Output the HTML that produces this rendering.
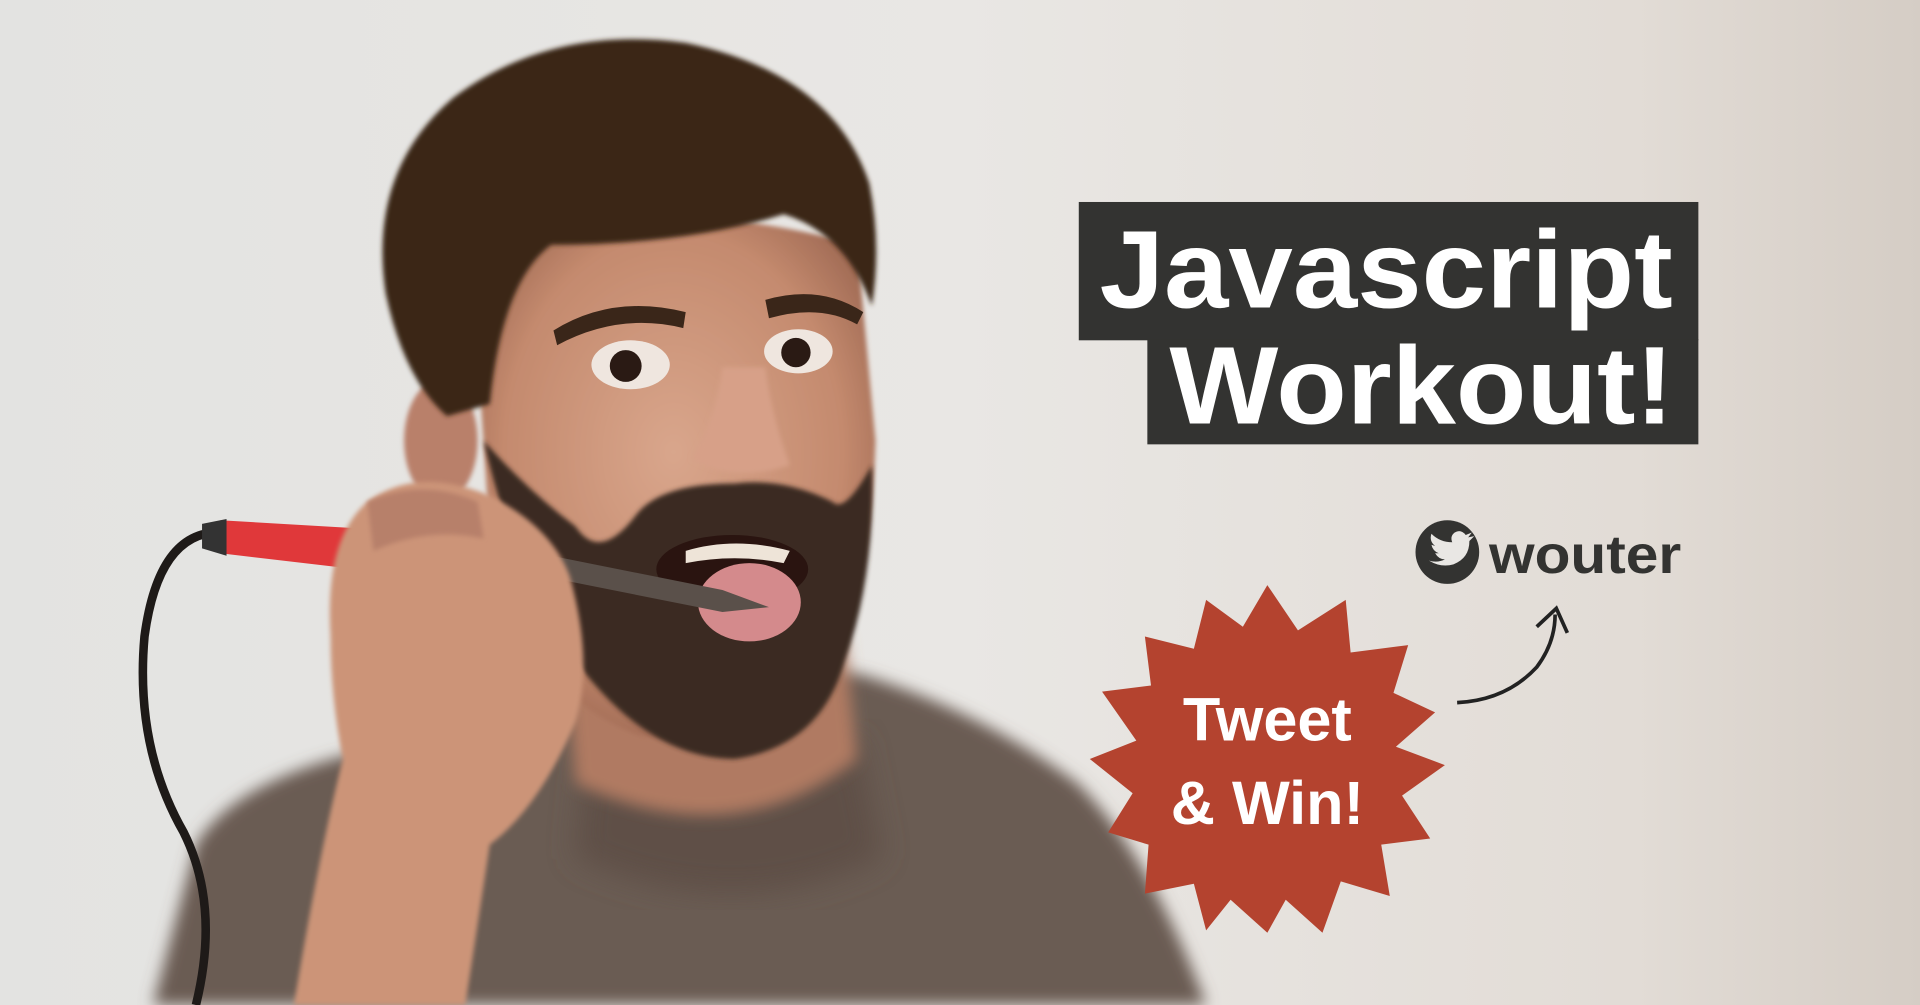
<!DOCTYPE html>
<html><head><meta charset="utf-8"><style>
html,body{margin:0;padding:0;width:1920px;height:1005px;overflow:hidden;background:#e4e2df}
svg{display:block}
</style></head><body>
<svg width="1920" height="1005" viewBox="0 0 1568 821" preserveAspectRatio="none" xmlns="http://www.w3.org/2000/svg">
<defs>
<linearGradient id="bg" x1="0" y1="0" x2="1" y2="0">
<stop offset="0" stop-color="#e3e3e1"/><stop offset="0.5" stop-color="#e9e7e4"/><stop offset="0.85" stop-color="#e2dcd6"/><stop offset="1" stop-color="#d5cdc5"/>
</linearGradient>
<radialGradient id="face" cx="0.5" cy="0.45" r="0.6">
<stop offset="0" stop-color="#d9a68c"/><stop offset="0.7" stop-color="#c48a6e"/><stop offset="1" stop-color="#9a6550"/>
</radialGradient>
<filter id="b2"><feGaussianBlur stdDeviation="2"/></filter>
<filter id="b6"><feGaussianBlur stdDeviation="6"/></filter>
<filter id="b12"><feGaussianBlur stdDeviation="12"/></filter>
</defs>
<rect width="1568" height="821" fill="url(#bg)"/>
<path d="M125 821 L160 690 Q190 640 290 615 L470 560 L700 550 Q800 580 880 640 Q940 700 985 821 Z" fill="#6a5b52" filter="url(#b6)"/>
<path d="M480 600 Q580 700 700 600 L720 700 Q600 760 470 700 Z" fill="#5e4f47" filter="url(#b12)"/>
<path d="M460 520 L690 520 L700 620 Q600 700 470 640 Z" fill="#b07a62" filter="url(#b6)"/>
<ellipse cx="360" cy="360" rx="30" ry="50" fill="#b9806a" filter="url(#b2)"/>
<path d="M385 210 Q520 150 700 200 L715 360 Q712 470 680 540 Q600 620 520 600 Q420 560 400 440 Z" fill="url(#face)" filter="url(#b2)"/>
<path d="M315 240 Q300 140 370 80 Q450 20 560 35 Q680 60 710 150 Q720 200 712 250 Q690 190 640 175 Q560 200 450 200 Q410 230 400 330 L365 340 Q330 310 315 240 Z" fill="#3a2619" filter="url(#b2)"/>
<path d="M395 360 Q420 470 470 540 Q530 620 600 620 Q670 610 690 540 Q715 470 712 380 Q690 420 680 410 Q640 390 600 395 Q540 395 520 420 Q490 460 470 430 Q430 400 395 360 Z" fill="#3b2a20" filter="url(#b2)"/>
<ellipse cx="598" cy="465" rx="62" ry="28" fill="#2a1410"/>
<path d="M560 450 Q600 438 645 450 L640 460 Q600 452 560 460 Z" fill="#eee4d8"/>
<ellipse cx="612" cy="492" rx="42" ry="32" fill="#d48a8c"/>
<path d="M452 270 Q500 240 560 255 L558 268 Q505 255 455 282 Z" fill="#3a2619"/>
<path d="M625 245 Q670 232 705 255 L700 265 Q670 248 628 260 Z" fill="#3a2619"/>
<ellipse cx="515" cy="298" rx="32" ry="20" fill="#efe6df"/>
<circle cx="511" cy="299" r="13" fill="#2a1a14"/>
<ellipse cx="652" cy="287" rx="28" ry="18" fill="#efe6df"/>
<circle cx="650" cy="288" r="12" fill="#2a1a14"/>
<path d="M590 300 Q585 340 565 375 Q600 395 645 380 Q630 340 625 300 Z" fill="#d7a088" filter="url(#b2)"/>
<path d="M185 435 Q130 430 118 520 Q110 610 150 680 Q180 740 160 821" stroke="#1e1a18" stroke-width="7" fill="none"/>
<path d="M180 425 L300 432 L440 440 L440 460 L300 466 L180 452 Z" fill="#e0383a"/>
<path d="M165 428 L185 424 L185 454 L165 448 Z" fill="#333"/>
<path d="M440 452 L590 482 L628 496 L590 500 L440 470 Z" fill="#5a504a"/>
<path d="M270 520 Q265 440 300 410 Q340 380 400 405 Q450 430 465 470 Q485 540 470 590 Q440 660 400 690 L380 821 L240 821 Q260 700 280 620 Q270 570 270 520 Z" fill="#cc9478" filter="url(#b2)"/>
<path d="M300 410 Q345 390 390 410 L395 440 Q350 430 305 450 Z" fill="#b7806a" filter="url(#b2)"/>
<rect x="881" y="165" width="506" height="113" fill="#333331"/>
<rect x="937" y="277" width="450" height="86" fill="#333331"/>
<text x="898" y="251" font-family="Liberation Sans, Arial, sans-serif" font-weight="bold" font-size="90" fill="#fff" textLength="468" lengthAdjust="spacingAndGlyphs">Javascript</text>
<text x="955" y="346" font-family="Liberation Sans, Arial, sans-serif" font-weight="bold" font-size="90" fill="#fff" textLength="412" lengthAdjust="spacingAndGlyphs">Workout!</text>
<circle cx="1182" cy="451" r="26" fill="#333331"/>
<path d="M1167 458 Q1177 464 1187 461 Q1200 456 1200 442 L1204 438 L1199 439 L1202 435 L1197 437 Q1193 432 1188 435 Q1184 438 1186 443 Q1176 443 1169 436 Q1167 442 1172 446 L1169 445 Q1170 450 1175 452 L1172 452 Q1175 457 1180 457 Q1174 460 1167 458 Z" fill="#e9e7e4"/>
<text x="1216" y="468" font-family="Liberation Sans, Arial, sans-serif" font-weight="bold" font-size="44" fill="#333331" textLength="157" lengthAdjust="spacingAndGlyphs">wouter</text>
<path d="M1190 574 Q1230 572 1255 545 Q1270 525 1270 502" stroke="#222" stroke-width="3" fill="none"/>
<path d="M1255 512 L1271 497 L1280 517" stroke="#222" stroke-width="3" fill="none"/>
<polygon fill="#b4432f" points="1035,478 1060,515 1099,490 1103,533 1150,527 1138,566 1172,582 1140,610 1180,625 1145,650 1168,685 1128,690 1135,732 1095,720 1080,762 1050,735 1035,762 1005,735 985,760 975,722 935,730 938,690 905,680 925,648 890,620 928,605 900,565 940,560 935,520 975,530 985,490 1015,512"/>
<text x="1035" y="605" text-anchor="middle" font-family="Liberation Sans, Arial, sans-serif" font-weight="bold" font-size="50" fill="#fff">Tweet</text>
<text x="1035" y="673" text-anchor="middle" font-family="Liberation Sans, Arial, sans-serif" font-weight="bold" font-size="50" fill="#fff">&amp; Win!</text>
</svg>
</body></html>
